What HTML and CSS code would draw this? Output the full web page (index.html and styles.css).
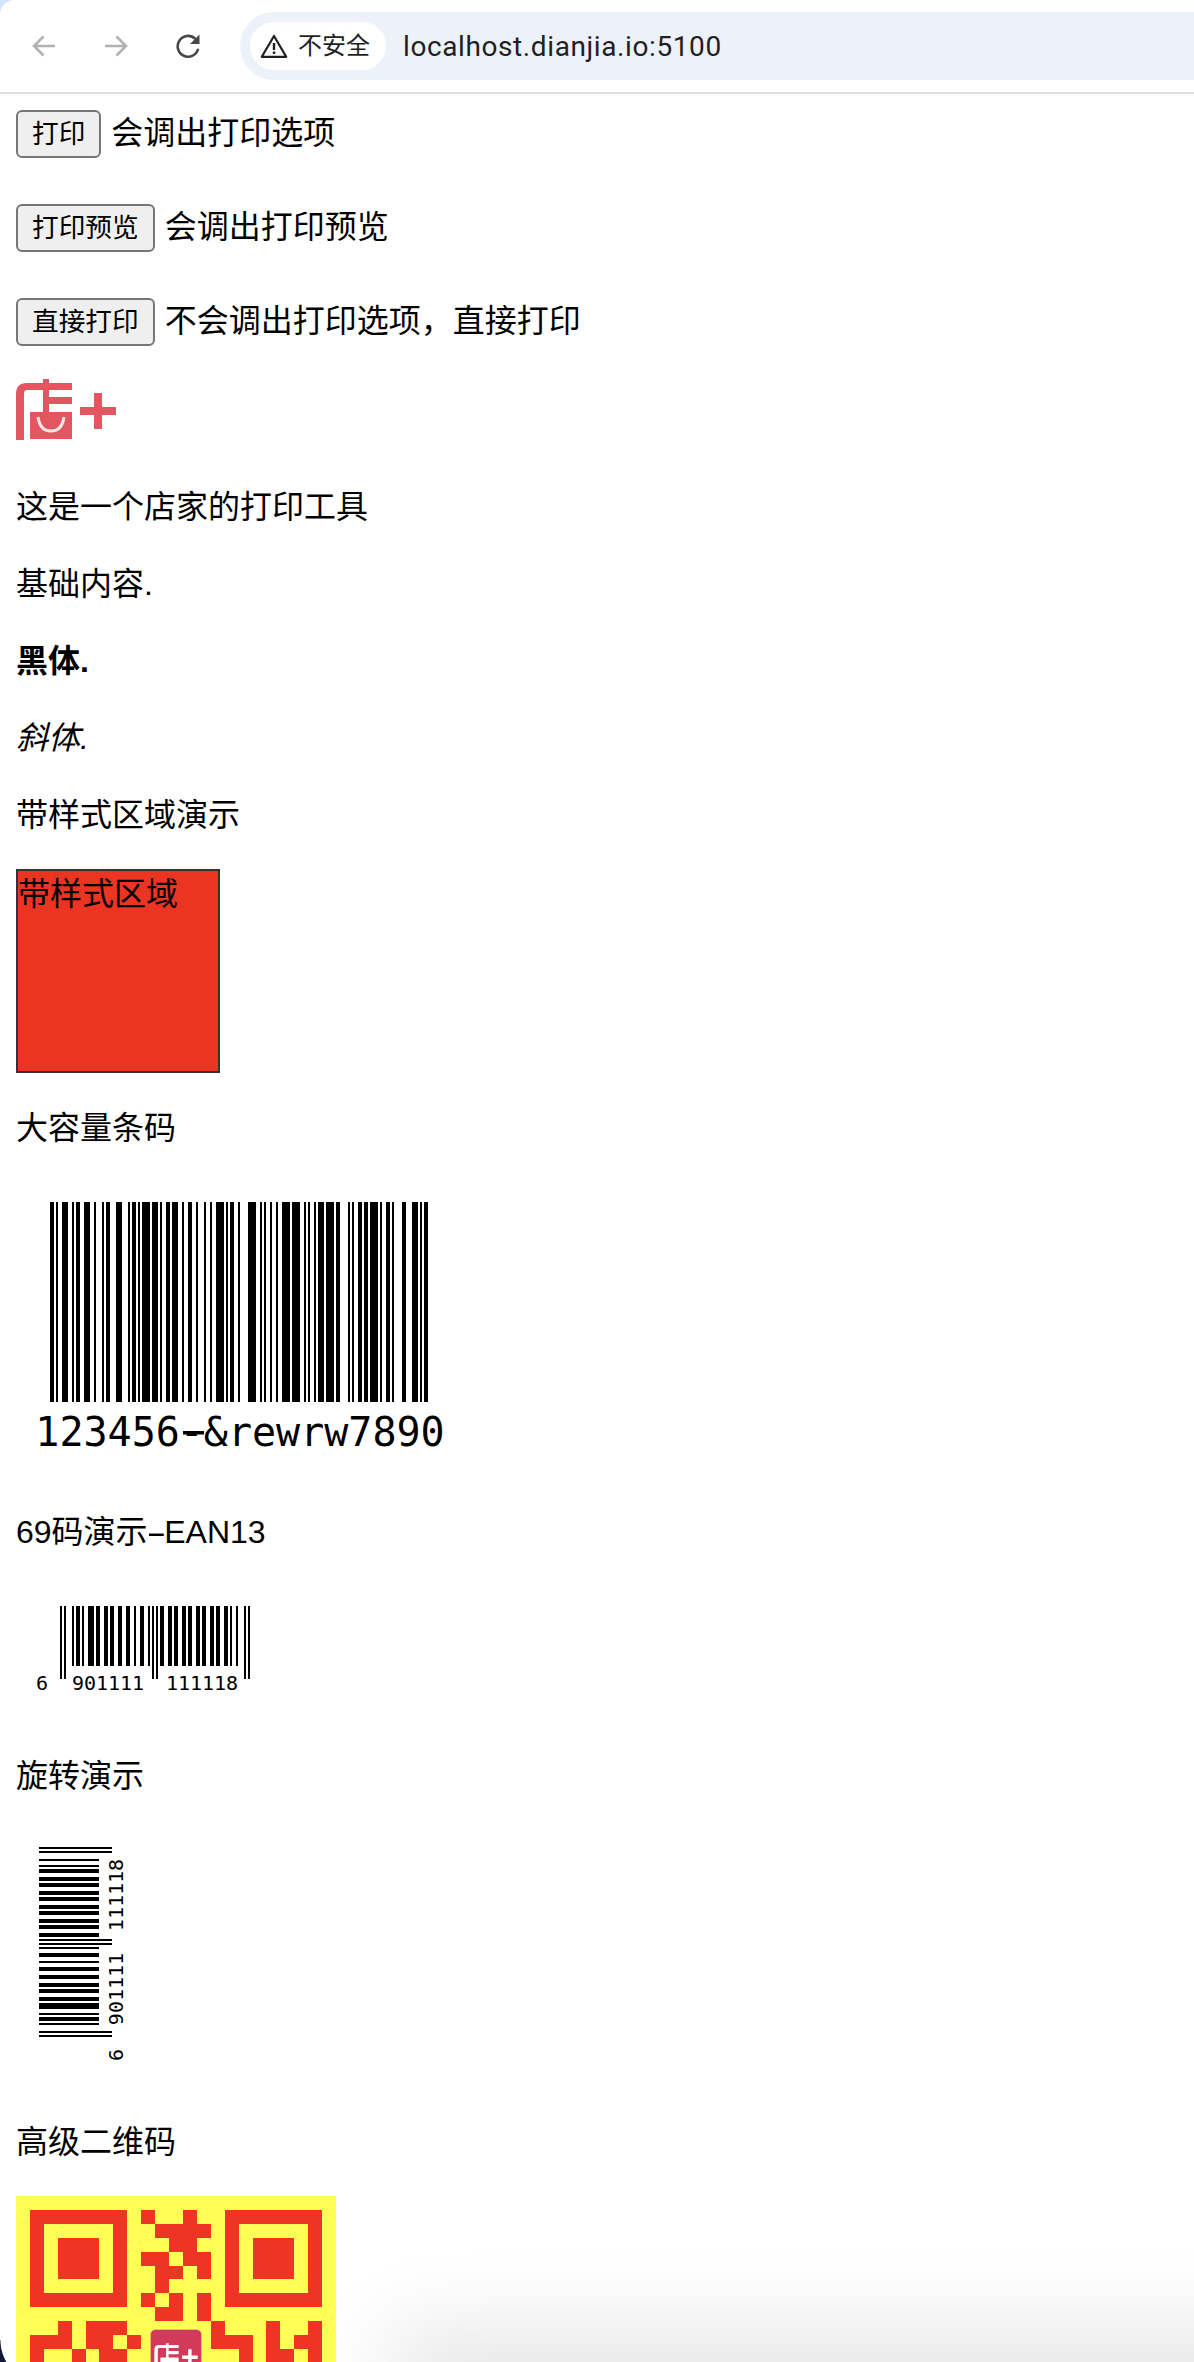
FILE: index.html
```html
<!DOCTYPE html>
<html lang="zh">
<head>
<meta charset="utf-8">
<title>打印工具</title>
<link rel="stylesheet" href="styles.css">
</head>
<body>
<div class="page">
  <header class="toolbar">
    <svg class="nav nav-off" viewBox="0 0 24 24"><path d="M23 12H2.5M11.5 2.5 2 12l9.5 9.5"/></svg>
    <svg class="nav nav-off" viewBox="0 0 24 24"><path d="M1 12h20.5M12.5 2.5 22 12l-9.5 9.5"/></svg>
    <svg class="nav nav-on" viewBox="0 0 24 24"><path d="M22.2 14.8A10.4 10.4 0 1 1 19.4 4.9"/><path class="nav-fill" d="M23.5 0.5V10H14z"/></svg>
    <div class="address">
      <div class="secure">
        <svg class="warn" viewBox="0 0 28 24"><path class="warn-line" d="M14 2 1.8 22.8h24.4z"/><path class="warn-mark" d="M12.8 9h2.4v7h-2.4zM12.8 17.6h2.4V20h-2.4z"/></svg>
        <span>不安全</span>
      </div>
      <span class="url">localhost.dianjia.io:5100</span>
    </div>
  </header>

  <main class="content">
    <div class="actions">
      <div class="action"><button class="btn" type="button">打印</button><span class="action-text">会调出打印选项</span></div>
      <div class="action"><button class="btn" type="button">打印预览</button><span class="action-text">会调出打印预览</span></div>
      <div class="action"><button class="btn" type="button">直接打印</button><span class="action-text">不会调出打印选项，直接打印</span></div>
    </div>

    <svg class="logo" viewBox="0 -1 100 74">
      <path class="logo-red" d="M0 61V15Q0 4 11 4H27V0H33V4H56V11H33V18H56V25H33V33H56V60H14V33H27V11H11Q8 11 8 15V61Z"/>
      <path class="logo-smile" d="M22 38Q24 52 35 52Q46 52 48 38"/>
      <path class="logo-red" d="M64 28H78V14H86V28H100V36H86V50H78V36H64Z"/>
    </svg>

    <p class="line">这是一个店家的打印工具</p>
    <p class="line">基础内容.</p>
    <p class="line"><strong>黑体.</strong></p>
    <p class="line"><em>斜体.</em></p>
    <p class="line">带样式区域演示</p>
    <div class="styled-box">带样式区域</div>
    <p class="line">大容量条码</p>

    <svg class="code128" viewBox="0 0 440 295">
      <line class="bars" x1="34" y1="120" x2="412" y2="120" stroke-width="200" stroke-dasharray="4 2 2 4 6 4 2 2 4 4 6 4 2 6 2 2 4 6 6 6 2 2 4 2 2 2 8 2 6 2 2 4 4 2 6 4 2 4 4 4 2 6 2 4 2 4 8 2 2 2 4 4 2 8 8 4 2 2 2 4 2 4 2 4 8 2 8 4 2 2 2 4 2 2 6 2 8 2 4 8 2 2 2 4 4 2 4 2 8 2 2 4 4 2 2 8 4 6 6 2 2 2 4"/>
      <text class="code128-text" x="224" y="264">123456-&amp;rewrw7890</text>
      <rect x="167" y="249" width="21" height="3.5"/>
    </svg>

    <p class="line">69码演示<span class="long-dash">-</span>EAN13</p>

    <svg class="ean" viewBox="0 0 254 135">
      <line class="bars" x1="44" y1="50" x2="234" y2="50" stroke-width="60" stroke-dasharray="2 2 2 6 2 2 4 2 2 4 6 2 4 4 4 2 4 4 4 4 4 4 2 4 4 4 2 2 2 2 2 2 4 4 4 2 4 4 4 2 4 4 4 2 4 4 4 2 4 4 4 2 2 4 2 6 2 2 2"/>
      <line class="bars" x1="44" y1="86" x2="234" y2="86" stroke-width="13" stroke-dasharray="2 2 2 86 2 2 2 86 2 2 2"/>
      <text class="ean-text ean-lead" x="20" y="104">6</text>
      <text class="ean-text ean-mid" x="92" y="104">901111</text>
      <text class="ean-text ean-mid" x="186" y="104">111118</text>
    </svg>

    <p class="line">旋转演示</p>

    <svg class="ean-rotated" viewBox="0 0 160 257">
      <g transform="translate(3 251) rotate(-90)">
        <line class="bars" x1="44" y1="50" x2="234" y2="50" stroke-width="60" stroke-dasharray="2 2 2 6 2 2 4 2 2 4 6 2 4 4 4 2 4 4 4 4 4 4 2 4 4 4 2 2 2 2 2 2 4 4 4 2 4 4 4 2 4 4 4 2 4 4 4 2 4 4 4 2 2 4 2 6 2 2 2"/>
        <line class="bars" x1="44" y1="86" x2="234" y2="86" stroke-width="13" stroke-dasharray="2 2 2 86 2 2 2 86 2 2 2"/>
        <text class="ean-text ean-lead" x="20" y="104">6</text>
        <text class="ean-text ean-mid" x="92" y="104">901111</text>
        <text class="ean-text ean-mid" x="186" y="104">111118</text>
      </g>
    </svg>

    <p class="line">高级二维码</p>

    <div class="qr-wrap">
      <svg class="qr" viewBox="0 0 23 23">
        <rect class="qr-bg" width="23" height="23"/>
        <path class="qr-red" d="M1 1h7v7h-7zM2 2h5v5h-5zM3 3h3v3h-3zM15 1h7v7h-7zM16 2h5v5h-5zM17 3h3v3h-3zM9 1h1v1h-1zM12 1h1v1h-1zM10 2h4v1h-4zM11 3h2v1h-2zM9 4h2v1h-2zM12 4h2v1h-2zM10 5h2v1h-2zM13 5h1v1h-1zM10 6h1v1h-1zM9 7h1v1h-1zM11 7h1v1h-1zM13 7h1v1h-1zM10 8h2v1h-2zM13 8h1v1h-1zM3 9h1v1h-1zM5 9h3v1h-3zM14 9h1v1h-1zM18 9h1v1h-1zM21 9h1v1h-1zM1 10h3v1h-3zM5 10h2v1h-2zM8 10h1v1h-1zM14 10h3v1h-3zM18 10h1v1h-1zM20 10h2v1h-2zM1 11h1v1h-1zM4 11h1v1h-1zM6 11h2v1h-2zM16 11h1v1h-1zM18 11h2v1h-2zM21 11h1v1h-1z"/>
      </svg>
      <svg class="qr-logo" viewBox="0 0 120 120">
        <rect class="qr-logo-bg" x="1" y="1" width="118" height="118" rx="12"/>
        <g transform="translate(10 33)">
          <path class="qr-logo-mark" d="M0 61V15Q0 4 11 4H27V0H33V4H56V11H33V18H56V25H33V33H56V60H14V33H27V11H11Q8 11 8 15V61Z"/>
          <path class="qr-logo-mark" d="M64 28H78V14H86V28H100V36H86V50H78V36H64Z"/>
        </g>
      </svg>
    </div>
  </main>

  <div class="bottom-shadow"></div>
</div>
</body>
</html>
```

FILE: styles.css
```css
html, body {
  margin: 0;
  padding: 0;
  background: #fff;
}

.page {
  position: relative;
  width: 1194px;
  height: 2362px;
  overflow: hidden;
  background: #fff;
  color: #000;
  font-family: "Liberation Sans", "Noto Sans CJK SC", sans-serif;
  font-size: 32px;
  line-height: 45px;
}

.page::before {
  content: "";
  position: absolute;
  top: 0;
  left: 0;
  width: 14px;
  height: 14px;
  background: radial-gradient(circle 14px at 14px 14px, transparent 97%, #d3e3fd 100%);
}

.page::after {
  content: "";
  position: absolute;
  left: 0;
  bottom: 0;
  width: 8px;
  height: 22px;
  background: radial-gradient(circle 44px at 44px 0, transparent 98%, #131a3a 100%);
}

/* browser chrome */
.toolbar {
  display: flex;
  align-items: center;
  gap: 48px;
  height: 92px;
  padding-left: 32px;
  border-bottom: 2px solid #dfdfdf;
  box-sizing: content-box;
}

.nav {
  flex: none;
  width: 24px;
  height: 24px;
  fill: none;
  stroke-width: 2.6;
}

.nav-off { stroke: #b1b1b1; }
.nav-on { stroke: #474747; }
.nav-fill { fill: #474747; stroke: none; }

.address {
  flex: 1;
  display: flex;
  align-items: center;
  height: 68px;
  margin-left: -8px;
  padding-left: 10px;
  border-radius: 34px 0 0 34px;
  background: #edf2fa;
  font-family: Roboto, "Noto Sans CJK SC", sans-serif;
}

.secure {
  display: flex;
  align-items: center;
  gap: 10px;
  height: 48px;
  padding: 0 16px 0 10px;
  border-radius: 24px;
  background: #fff;
  color: #1f1f1f;
  font-size: 24px;
}

.warn {
  width: 28px;
  height: 24px;
}

.warn-line {
  fill: none;
  stroke: #1f1f1f;
  stroke-width: 2.2;
  stroke-linejoin: round;
}

.warn-mark { fill: #1f1f1f; }

.url {
  margin-left: 17px;
  color: #1f1f1f;
  font-size: 28px;
  letter-spacing: 0.6px;
}

/* page content */
.content {
  display: flex;
  flex-direction: column;
  align-items: flex-start;
  gap: 32px;
  padding: 16px 16px 0;
}

.actions {
  display: flex;
  flex-direction: column;
  gap: 46px;
}

.action {
  display: flex;
  align-items: center;
  gap: 10px;
  height: 48px;
}

.action-text {
  padding-bottom: 2px;
}

.btn {
  height: 48px;
  padding: 0 14px;
  border: 2px solid #767676;
  border-radius: 6px;
  background: #efefef;
  color: #000;
  font-family: "Liberation Sans", "Noto Sans CJK SC", sans-serif;
  font-size: 26.67px;
  line-height: 1;
}

.logo {
  display: block;
  width: 100px;
  height: 74px;
  filter: blur(0.6px);
}

.logo-red { fill: #e2565f; }

.logo-smile {
  fill: none;
  stroke: #fbe6e6;
  stroke-width: 3;
}

.line {
  margin: 0;
  height: 44px;
  padding-top: 1px;
}

.long-dash {
  display: inline-block;
  margin: 0 3px;
  transform: scaleX(1.9);
}

.styled-box {
  box-sizing: content-box;
  width: 200px;
  height: 199px;
  padding-top: 1px;
  border: 2px solid #333;
  background: #ec3423;
}

.bars {
  stroke: #000;
  shape-rendering: crispEdges;
}

.code128 {
  display: block;
  width: 440px;
  height: 295px;
}

.code128-text {
  font-family: "DejaVu Sans Mono", monospace;
  font-size: 40px;
  text-anchor: middle;
}

.ean {
  display: block;
  width: 254px;
  height: 135px;
}

.ean-rotated {
  display: block;
  width: 160px;
  height: 257px;
}

.ean-text {
  font-family: "DejaVu Sans Mono", monospace;
  font-size: 20px;
}

.ean-mid { text-anchor: middle; }

.qr-wrap {
  position: relative;
  z-index: 1;
  width: 320px;
  height: 320px;
}

.qr {
  display: block;
  width: 320px;
  height: 320px;
}

.qr-bg { fill: #fffe54; }

.qr-red {
  fill: #ee3424;
  fill-rule: evenodd;
  shape-rendering: crispEdges;
}

.qr-logo {
  position: absolute;
  top: 133px;
  left: 134px;
  width: 52px;
  height: 52px;
}

.qr-logo-bg {
  fill: #d13a5a;
  stroke: #eebb77;
  stroke-width: 2;
}

.qr-logo-mark { fill: #fff; }

.bottom-shadow {
  position: absolute;
  left: 420px;
  right: -120px;
  top: 2362px;
  height: 40px;
  box-shadow: 0 0 90px 30px rgba(0, 0, 0, 0.11);
}
```
